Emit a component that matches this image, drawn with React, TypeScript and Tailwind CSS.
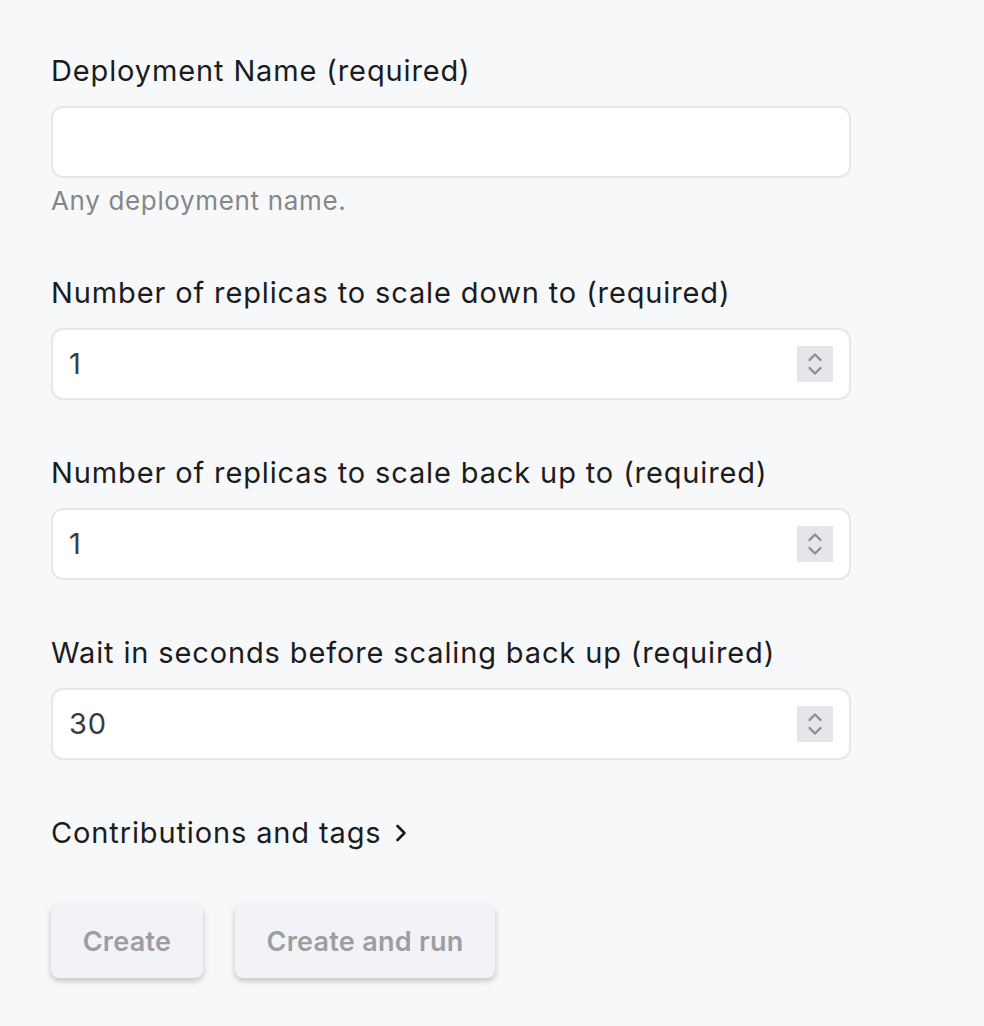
function Spinner() {
  return (
    <div className="flex h-9 w-9 flex-col items-center justify-center bg-[#e5e5ea]">
      <svg width="18" height="28" viewBox="0 0 18 28" fill="none" stroke="#8e8e93" strokeWidth="2.4" strokeLinecap="round" strokeLinejoin="round">
        <path d="M3.5 10 L9 4.5 L14.5 10" />
        <path d="M3.5 18 L9 23.5 L14.5 18" />
      </svg>
    </div>
  );
}

function Field({ label, value, hint, number }: { label: string; value?: string; hint?: string; number?: boolean }) {
  return (
    <div className="flex flex-col">
      <label className="text-[29px] leading-[36px] tracking-[0.03em] text-[#1c1c1e]">{label}</label>
      <div className="mt-[17px] flex h-[72px] w-[800px] items-center rounded-[12px] border-2 border-[#e6e6eb] bg-white pl-[16px] pr-[16px]">
        <span className="flex-1 text-[29px] tracking-[0.03em] text-[#3a3a3c]">{value}</span>
        {number && <Spinner />}
      </div>
      {hint && <p className="mt-[6px] pb-[2px] text-[26px] leading-[34px] tracking-[0.025em] text-[#86868b]">{hint}</p>}
    </div>
  );
}

export default function App() {
  return (
    <div className="min-h-[1026px] bg-[#f7f8fa] px-[51px] pt-[53px] font-['Inter',sans-serif]">
      <div className="flex flex-col gap-[55px]">
        <Field label="Deployment Name (required)" hint="Any deployment name." />
        <Field label="Number of replicas to scale down to (required)" value="1" number />
        <Field label="Number of replicas to scale back up to (required)" value="1" number />
        <Field label="Wait in seconds before scaling back up (required)" value="30" number />
      </div>
      <div className="mt-[55px] flex items-center gap-[14px] text-[29px] leading-[36px] tracking-[0.03em] text-[#1c1c1e]">
        <span>Contributions and tags</span>
        <svg width="12" height="18" viewBox="0 0 12 18" fill="none" stroke="#1c1c1e" strokeWidth="2.6" strokeLinecap="round" strokeLinejoin="round">
          <path d="M2.5 2 L9.5 9 L2.5 16" />
        </svg>
      </div>
      <div className="mt-[54px] flex gap-[32px]">
        <button className="h-[73px] w-[152px] rounded-[8px] bg-[#f2f3f6] pt-[2px] text-[27px] font-semibold tracking-[0.01em] text-[#9d9da2] shadow-[0_3px_6px_rgba(0,0,0,0.22)]">
          Create
        </button>
        <button className="h-[73px] w-[260px] rounded-[8px] bg-[#f2f3f6] pt-[2px] text-[27px] font-semibold tracking-[0.01em] text-[#9d9da2] shadow-[0_3px_6px_rgba(0,0,0,0.22)]">
          Create and run
        </button>
      </div>
    </div>
  );
}
